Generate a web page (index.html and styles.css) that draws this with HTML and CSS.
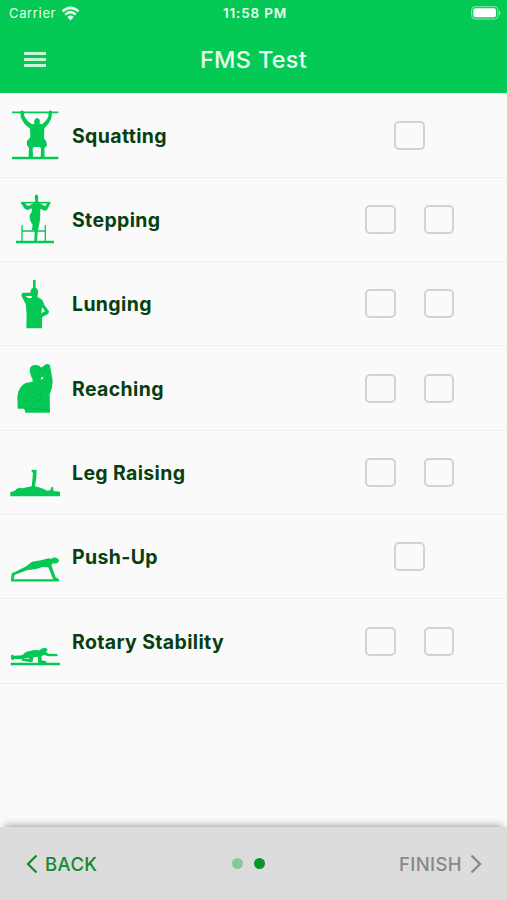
FILE: index.html
```
<!DOCTYPE html>
<html lang="en">
<head>
    <meta charset="UTF-8">
    <meta name="viewport" content="width=device-width, initial-scale=1.0">
    <title>FMS Test</title>
    <link rel="stylesheet" href="styles.css">
</head>
<body>

<header class="header">
    <div class="status-bar">
        <div class="carrier">
            <span>Carrier</span>
            <svg class="wifi" viewBox="0 0 54 42">
                <path d="M4 15Q27-5 50 15M12 24Q27 10 42 24" fill="none" stroke="#e9fff0" stroke-width="7"/>
                <path d="M18 31Q27 23 36 31L27 41Z" fill="#e9fff0"/>
            </svg>
        </div>
        <span class="clock">11:58 PM</span>
        <svg class="battery" viewBox="0 0 90 42">
            <rect x="2" y="2" width="79" height="37" rx="10" fill="none" stroke="#8ee8ad" stroke-width="3"/>
            <rect x="7" y="7" width="68" height="27" rx="6" fill="#fff"/>
            <path d="M84 14Q93 21 84 28Z" fill="#8ee8ad"/>
        </svg>
    </div>
    <div class="title-bar">
        <button class="menu" aria-label="Menu"><span></span><span></span><span></span></button>
        <h1 class="title">FMS Test</h1>
    </div>
</header>

<main class="tests">
    <div class="test">
        <svg class="pose" viewBox="0 -21 216 252">
            <path d="M36 37H175" stroke-width="5"/>
            <path d="M36 174H175" stroke-width="8"/>
            <path class="fill" d="M61 33Q66 29 71 34L73 49Q80 63 96 73L103 72Q100 57 111 54Q122 56 119 72L126 73Q141 62 145 49L146 34Q152 29 156 34L155 52Q149 70 133 85L132 115Q143 127 140 138L133 145L134 172H122L123 145L119 141H102L98 145L99 172H86L87 145Q78 134 81 123L91 112L90 86Q70 73 62 51Z"/>
        </svg>
        <span class="name">Squatting</span>
        <div class="checks"><span class="check"></span></div>
    </div>
    <div class="test">
        <svg class="pose" viewBox="0 -23 216 252">
            <path d="M64 54H151" stroke-width="5"/>
            <path d="M48 172H162" stroke-width="7"/>
            <path d="M66 121V169M136 121V169M66 139H136" stroke-width="4"/>
            <path class="fill" d="M62 55Q67 49 73 54L84 64L103 55L106 48Q101 33 109 29Q117 31 114 48L118 55L135 65L143 55Q149 49 151 56L141 76L133 78L122 72Q119 83 121 91L119 112L113 142L111 170H103L104 139L102 136H95L98 121Q87 105 89 92L96 80L95 71L82 77L74 72Z"/>
        </svg>
        <span class="name">Stepping</span>
        <div class="checks"><span class="check"></span><span class="check"></span></div>
    </div>
    <div class="test">
        <svg class="pose" viewBox="0 -25 216 252">
            <path class="fill" d="M99 30Q103 26 107 30V52Q116 57 114 69L112 80L124 86Q131 94 133 104L147 123L145 130L126 141V174H79L80 130L77 101L65 78Q62 68 72 67H91Q92 55 99 52ZM77 77L85 84L96 82L95 77ZM126 110L124 129L135 123Z"/>
        </svg>
        <span class="name">Lunging</span>
        <div class="checks"><span class="check"></span><span class="check"></span></div>
    </div>
    <div class="test">
        <svg class="pose" viewBox="0 -21 216 252">
            <path class="fill" d="M89 55Q88 37 104 36Q118 34 123 44L139 33Q151 31 151 43L158 83L156 104L149 124L150 179H76L73 167H53L52 132Q54 101 77 90L98 86Q99 77 94 72Z"/>
            <path class="crease" d="M57 163Q68 145 85 143L113 126Q126 119 127 131Q119 144 101 151L91 164L75 167M123 46L113 68L116 88M139 42L127 61M132 88Q145 74 148 55M73 167L149 170"/>
            <path class="gap" d="M123 74Q129 68 130 76L125 81Z"/>
        </svg>
        <span class="name">Reaching</span>
        <div class="checks"><span class="check"></span><span class="check"></span></div>
    </div>
    <div class="test">
        <svg class="pose" viewBox="0 -59 216 252">
            <path class="fill" d="M31 127L44 124L49 118L59 114L68 116L84 112L95 110L97 91L99 70L94 65L96 60L110 61L109 83L105 110L126 116L142 123L151 122L155 111L160 113V124L180 126V140H31Z"/>
        </svg>
        <span class="name">Leg Raising</span>
        <div class="checks"><span class="check"></span><span class="check"></span></div>
    </div>
    <div class="test">
        <svg class="pose" viewBox="0 -76 216 252">
            <path d="M33 120H177" stroke-width="7"/>
            <path class="fill" d="M33 119L35 100Q38 95 45 95L79 78L96 64L123 60L146 54L154 56Q160 49 171 53Q180 58 175 66Q169 71 159 69L154 74L167 111L176 116V121H161L145 81L128 80Q103 90 83 89L43 104L41 119Z"/>
        </svg>
        <span class="name">Push-Up</span>
        <div class="checks"><span class="check"></span></div>
    </div>
    <div class="test">
        <svg class="pose" viewBox="0 -93 216 252">
            <path d="M32 102H180" stroke-width="7"/>
            <path class="fill" d="M33 76L37 74L43 77L66 76L79 65L103 60L119 61Q126 52 140 55Q146 61 137 66L146 71L171 72L174 76L169 79L147 79L132 75L125 78L125 91L139 94V100H115L113 80L101 82L97 96H88L67 92L63 87L88 86L86 83L67 87L43 87L38 91L33 87Z"/>
        </svg>
        <span class="name">Rotary Stability</span>
        <div class="checks"><span class="check"></span><span class="check"></span></div>
    </div>
</main>

<footer class="footer">
    <button class="nav back">
        <svg class="chevron" viewBox="0 0 12 20"><path d="M10.5 1.5L2 10L10.5 18.5"/></svg>
        <span>BACK</span>
    </button>
    <div class="dots"><span class="dot"></span><span class="dot active"></span></div>
    <button class="nav finish">
        <span>FINISH</span>
        <svg class="chevron" viewBox="0 0 12 20"><path d="M1.5 1.5L10 10L1.5 18.5"/></svg>
    </button>
</footer>

</body>
</html>
```
FILE: styles.css
```
* {
    box-sizing: border-box;
}
body {
    display: flex;
    flex-direction: column;
    height: 900px;
    margin: 0;
    overflow: hidden;
    background-color: #fafafa;
    font-family: Inter, sans-serif;
}
button {
    padding: 0;
    border: none;
    background: none;
    font-family: inherit;
}

/* header */
.header {
    height: 93.4px;
    background-color: #04ca55;
    color: #e9fff0;
}
.status-bar {
    display: grid;
    grid-template-columns: 1fr auto 1fr;
    align-items: center;
    height: 26px;
    padding: 0 6px 0 9px;
    font-size: 13px;
}
.carrier {
    display: flex;
    align-items: center;
    gap: 5px;
    letter-spacing: 0.65px;
}
.wifi {
    width: 19px;
    height: 15px;
}
.clock {
    font-size: 13.5px;
    font-weight: 600;
    letter-spacing: 0.8px;
}
.battery {
    justify-self: end;
    width: 30px;
    height: 14px;
}
.title-bar {
    display: grid;
    grid-template-columns: 1fr auto 1fr;
    align-items: center;
    height: 67px;
    padding: 0 24px;
}
.menu {
    display: flex;
    flex-direction: column;
    gap: 3px;
    width: 22px;
}
.menu span {
    height: 3px;
    background-color: #c6f6d6;
}
.title {
    margin: 0;
    font-size: 23.5px;
    font-weight: 500;
    letter-spacing: 0.3px;
}

/* list of tests */
.tests {
    flex: 1;
}
.test {
    display: flex;
    align-items: center;
    height: 84.33px;
    border-bottom: 1px solid #efefef;
}
.pose {
    width: 72px;
    height: 84px;
    fill: none;
    stroke: #04ca55;
}
.pose .fill {
    fill: #04ca55;
    stroke: none;
}
.pose .crease {
    stroke: #04ad45;
    stroke-width: 2;
}
.pose .gap {
    fill: #fafafa;
    stroke: none;
}
.name {
    flex: 1;
    padding-top: 1px;
    color: #073f10;
    font-size: 19.5px;
    font-weight: 650;
    letter-spacing: 0.35px;
}
.checks {
    display: flex;
    justify-content: center;
    gap: 28px;
    width: 195px;
}
.check {
    width: 30.5px;
    height: 29px;
    border: 2px solid #d2d2d2;
    border-radius: 5px;
}

/* bottom navigation */
.footer {
    display: grid;
    grid-template-columns: 1fr auto 1fr;
    align-items: center;
    height: 73.5px;
    padding: 1px 25px 0 26px;
    background-color: #dcdcdc;
    box-shadow: 0 -7px 7px -5px #aaa;
}
.nav {
    display: flex;
    align-items: center;
    font-size: 18.5px;
    font-weight: 550;
    letter-spacing: 0.4px;
}
.back {
    gap: 7px;
    color: #168a2e;
}
.finish {
    justify-self: end;
    gap: 8px;
    color: #888;
}
.chevron {
    width: 12px;
    height: 20px;
    fill: none;
    stroke: currentColor;
    stroke-width: 2.3;
}
.dots {
    display: flex;
    gap: 11px;
    margin-right: 11px;
}
.dot {
    width: 11px;
    height: 11px;
    border-radius: 50%;
    background-color: #8ac79b;
}
.dot.active {
    background-color: #06952a;
}
```
